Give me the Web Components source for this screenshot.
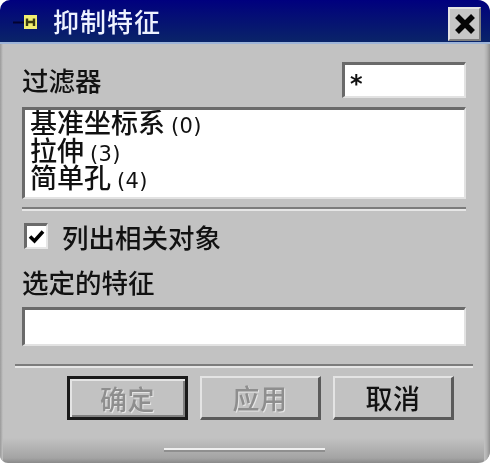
<!DOCTYPE html>
<html lang="zh"><head><meta charset="utf-8"><title>抑制特征</title>
<style>
html,body{margin:0;padding:0;background:#fff;width:490px;height:463px;overflow:hidden}
body{font-family:"Noto Sans CJK SC","Liberation Sans",sans-serif;font-size:26.500px;font-weight:500;color:#111}
</style></head><body>
<ug-dialog caption="抑制特征">
  <ug-row>
    <span>过滤器</span>
    <ug-field mono style="width:124px;height:36px;">*</ug-field>
  </ug-row>
  <ug-field list style="height:92px;margin-top:9px">
    <ug-item>基准坐标系 <ug-num>(0)</ug-num></ug-item>
    <ug-item>拉伸 <ug-num>(3)</ug-num></ug-item>
    <ug-item>简单孔 <ug-num>(4)</ug-num></ug-item>
  </ug-field>
  <ug-sep style="margin-top:8px"></ug-sep>
  <ug-check style="margin-top:12px">列出相关对象</ug-check>
  <div style="margin-top:19px;height:30px;line-height:28px">选定的特征</div>
  <ug-field style="height:39px;margin-top:9px"></ug-field>
  <ug-sep wide style="margin:18px -7px 0"></ug-sep>
  <ug-actions style="margin-top:8px">
    <ug-button default disabled>确定</ug-button>
    <ug-button disabled>应用</ug-button>
    <ug-button>取消</ug-button>
  </ug-actions>
</ug-dialog>
<script>
function def(name, css, html){
  customElements.define(name, class extends HTMLElement{
    connectedCallback(){
      if(this.shadowRoot) return;
      const r=this.attachShadow({mode:'open'});
      r.innerHTML='<style>'+css+'</style>'+(typeof html==='function'?html(this):html);
    }
  });
}
def('ug-dialog',`
:host{display:block;width:490px;height:463px;box-sizing:border-box;position:relative;overflow:hidden;
 border-radius:10px 12px 12px 8px;background:linear-gradient(#c2c2c2 0,#c2c2c2 438px,#a4a4a4 458px,#8a8a8a 463px);
 filter:blur(.45px)}
.edgeR{position:absolute;top:44px;right:0;bottom:0;width:6px;background:linear-gradient(90deg,#c2c2c2,#b0b0b0 50%,#8e8e8e)}
.edgeL{position:absolute;top:44px;left:0;bottom:0;width:3px;background:linear-gradient(90deg,#9a9a9a,#c2c2c2)}
.bar{display:flex;align-items:center;height:44px;box-sizing:border-box;padding:0 9px 0 13px;color:#eef2ff;
 background:linear-gradient(#00007e,#0a2468);border-bottom:2px solid #9db4d8}
.ico{flex:none;margin-right:16px;margin-top:1px;display:block}
.t{font-size:26px;letter-spacing:1px;line-height:40px;flex:1}
.x{flex:none;width:33px;height:34px;margin-top:5px;box-sizing:border-box;background:#c6c6c6;border:2px solid;border-color:#e4e4e4 #7e7e7e #7e7e7e #e4e4e4;display:flex;align-items:center;justify-content:center}
.main{display:flex;flex-direction:column;padding:18px 24px 0 22px;position:relative}
.grip{position:absolute;left:164px;top:448px;width:161px;height:4px;background:linear-gradient(#efefef 50%,#8f8f8f 50%)}
`,h=>`<div class="bar">
<svg class="ico" width="24" height="14" viewBox="0 0 24 14"><path d="M0 7.500h11" stroke="#020230" stroke-width="2"/><rect x="11" y="0" width="13" height="14" fill="#f2ee70"/><path d="M14 3.500v7.500M21 3.500v7.500M14 7h7" stroke="#3a3a10" stroke-width="2.400" fill="none"/></svg>
<span class="t">${h.getAttribute('caption')}</span>
<span class="x"><svg width="24" height="24" viewBox="0 0 24 24"><path d="M4 4L20 20M20 4L4 20" stroke="#050505" stroke-width="5.500"/></svg></span>
</div><div class="edgeL"></div><div class="edgeR"></div><div class="main"><slot></slot></div><div class="grip"></div>`);
def('ug-row',`:host{display:flex;align-items:center;justify-content:space-between;height:36px;line-height:36px}`,`<slot></slot>`);
def('ug-field',`
:host{display:block;box-sizing:border-box;background:#fff;border-style:solid;border-width:3px 2px 2px 3px;border-color:#6a6a6a #e2e2e2 #e2e2e2 #6a6a6a;
 padding:0 0 0 5px;overflow:hidden}
:host([list]){font-size:27px}
:host([mono]){font-family:"DejaVu Sans",sans-serif;font-weight:700;font-size:24px;line-height:24px;padding-top:7px}
`,`<slot></slot>`);
def('ug-item',`:host{display:block;height:27.500px;line-height:24px;white-space:nowrap}`,`<slot></slot>`);
def('ug-num',`:host{font-family:"DejaVu Sans",sans-serif;font-size:21px;font-weight:400;letter-spacing:.3px;line-height:1}`,`<slot></slot>`);
def('ug-sep',`:host{display:block;height:4px;background:linear-gradient(#7c7c7c 50%,#e6e6e6 50%)}`,``);
def('ug-check',`
:host{display:flex;align-items:center;height:26px;padding-left:2px}
.b{flex:none;width:24px;height:26px;box-sizing:border-box;background:#fff;border-style:solid;border-width:3px 2px 2px 3px;border-color:#6a6a6a #e6e6e6 #e6e6e6 #6a6a6a;margin-right:14px;display:flex;align-items:center;justify-content:center}
`,`<span class="b"><svg width="17" height="17" viewBox="0 0 17 17"><path d="M2 8.500L6.500 13L15 3.500" fill="none" stroke="#000" stroke-width="3.600"/></svg></span><slot></slot>`);
def('ug-actions',`:host{display:flex;gap:12px;padding-left:45px}`,`<slot></slot>`);
def('ug-button',`
:host{display:flex;align-items:center;justify-content:center;box-sizing:border-box;width:121px;height:44px;background:#c2c2c2;
 border-style:solid;border-width:2px 3px 3px 2px;border-color:#e4e4e4 #5a5a5a #5a5a5a #e4e4e4;font-size:27px;letter-spacing:.5px;color:#111}
:host([disabled]){color:#8e8e8e;text-shadow:1px 1px 0 #e6e6e6}
:host([default]){border:3px solid #1a1a1a;box-shadow:inset 2px 2px 0 #e4e4e4,inset -2px -2px 0 #808080}
`,`<slot></slot>`);
</script>
</body></html>
